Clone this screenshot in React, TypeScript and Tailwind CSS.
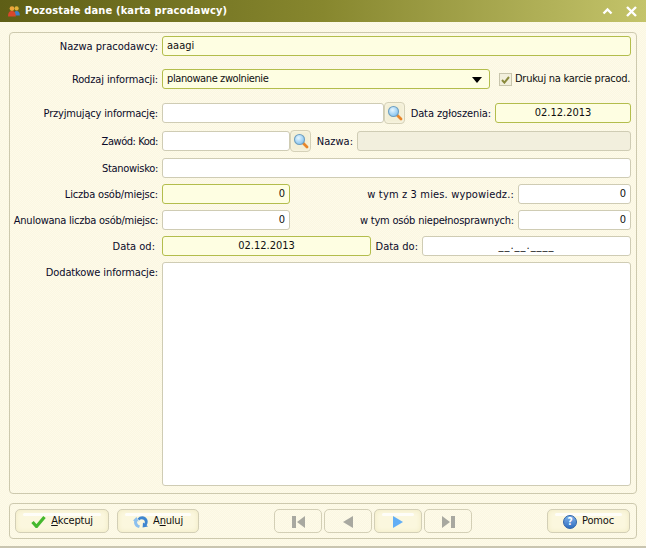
import React from "react";

const font = "font-['DejaVu_Sans',sans-serif] [font-stretch:condensed]";

function Label({ w, children }: { w: string; children: React.ReactNode }) {
  return <div className={`${w} h-[20px] shrink-0 whitespace-nowrap pt-px text-right text-[11px] leading-[19px] text-[#0a0a28]`}>{children}</div>;
}

function Field({ className, req, gray, right, center, children }: { className: string; req?: boolean; gray?: boolean; right?: boolean; center?: boolean; children?: React.ReactNode }) {
  const tone = req ? "border-[#b3bd4c] bg-[#fefee2]" : gray ? "border-[#cfccb4] bg-[#f2efdd]" : "border-[#cfccb4] bg-white";
  const align = right ? "justify-end" : center ? "justify-center" : "justify-start";
  return <div className={`${className} ${tone} ${align} flex h-[20px] items-center rounded-[3px] border px-[4px] pt-px text-[11px] text-[#101010] shrink-0`}>{children}</div>;
}

function Magnifier({ id }: { id: string }) {
  return (
    <div className="-my-px flex h-[22px] w-[21px] shrink-0 items-center justify-center rounded-[4px] border border-[#d5d1b8] bg-[#f3efd6] shadow-[inset_0_0_3px_#fbf9ec]">
      <svg width="16" height="16" viewBox="0 0 16 16">
        <defs>
          <radialGradient id={id} cx="40%" cy="35%" r="70%">
            <stop offset="0%" stopColor="#e6f6ff" />
            <stop offset="100%" stopColor="#7fc0ee" />
          </radialGradient>
        </defs>
        <path d="M9.5 9.5 14 14" stroke="#e8862a" strokeWidth="2.8" strokeLinecap="round" />
        <circle cx="6.5" cy="6.5" r="5" fill={`url(#${id})`} stroke="#6f9fc0" strokeWidth="1.1" />
      </svg>
    </div>
  );
}

function Btn({ className, children, hi }: { className: string; children: React.ReactNode; hi?: boolean }) {
  return (
    <div className={`${className} relative flex h-[24px] shrink-0 items-center justify-center rounded-[5px] border border-[#d3cfb6] text-[11px] tracking-[-0.2px] text-[#101010] ${hi ? "bg-[#fbf7de] shadow-[inset_0_0_5px_#efe9c0]" : ""}`}>
      {hi && <div className="absolute left-[7px] right-[7px] top-[3px] h-[3px] rounded-full bg-white/80" />}
      <div className="relative flex items-center gap-[5px] pt-px">{children}</div>
    </div>
  );
}

export default function App() {
  return (
    <div className={`${font} flex h-[548px] w-[646px] flex-col overflow-hidden bg-[repeating-conic-gradient(#fbf7e1_0_25%,#fdfaea_0_50%)] bg-[length:2px_2px]`}>
      <div className="flex h-[22px] shrink-0 items-center bg-gradient-to-r from-[#5e5e16] via-[#87872e] to-[#c4c46a] pl-[8px] pr-[9px]">
        <svg width="12" height="12" viewBox="0 0 12 12" className="shrink-0">
          <circle cx="8.6" cy="3.4" r="2.1" fill="#e2b23a" />
          <path d="M5.5 10.5c0-3 1.2-4.6 3.2-4.6s3.1 1.6 3.1 4.6z" fill="#3d7fc9" />
          <circle cx="4" cy="3.6" r="2.4" fill="#eda53c" />
          <path d="M0 11.5c0-3.6 1.4-5.4 3.9-5.4s3.9 1.8 3.9 5.4z" fill="#d8472c" />
        </svg>
        <div className="ml-[5px] text-[11px] font-bold tracking-[0.15px] text-white">Pozostałe dane (karta pracodawcy)</div>
        <div className="ml-auto flex items-center gap-[13px]">
          <svg width="11" height="8" viewBox="0 0 11 8"><path d="M1.5 6.5 5.5 2.5l4 4" stroke="#fff" strokeWidth="2.4" fill="none" /></svg>
          <svg width="11" height="11" viewBox="0 0 11 11"><path d="M1 1l9 9M10 1l-9 9" stroke="#fff" strokeWidth="2.4" fill="none" /></svg>
        </div>
      </div>

      <div className="mx-[9px] mt-[10px] flex h-[462px] shrink-0 flex-col rounded-[4px] border border-[#cdc9ae] pr-[5px] pt-[3px]">
        <div className="flex gap-[4px]">
          <Label w="w-[148px]">Nazwa pracodawcy:</Label>
          <Field className="w-[469px]" req>aaagi</Field>
        </div>

        <div className="mt-[13px] flex items-center gap-[4px]">
          <Label w="w-[148px] tracking-[-0.12px]">Rodzaj informacji:</Label>
          <Field className="w-[328px] !justify-between" req>
            <span className="tracking-[-0.4px]">planowane zwolnienie</span>
            <svg width="10" height="6" viewBox="0 0 10 6" className="mr-[3px]"><path d="M0 0h10L5 6z" fill="#000" /></svg>
          </Field>
          <div className="ml-[5px] flex items-center gap-[3px] whitespace-nowrap pt-px text-[11px] tracking-[-0.25px] text-[#101010]">
            <div className="flex h-[13px] w-[13px] items-center justify-center border border-[#c8c5ac] bg-[#f2efdc]">
              <svg width="9" height="8" viewBox="0 0 9 8"><path d="M1 4l2.4 2.6L8 1" stroke="#8a8a3c" strokeWidth="2" fill="none" /></svg>
            </div>
            Drukuj na karcie pracod.
          </div>
        </div>

        <div className="mt-[14px] flex items-center">
          <Label w="w-[148px] tracking-[-0.18px]">Przyjmujący informację:</Label>
          <Field className="ml-[4px] w-[222px]" />
          <Magnifier id="m1" />
          <Label w="w-[86px] tracking-[-0.1px]">Data zgłoszenia:</Label>
          <Field className="ml-[4px] w-[136px]" req center>02.12.2013</Field>
        </div>

        <div className="mt-[8px] flex items-center">
          <Label w="w-[148px] tracking-[-0.45px]">Zawód: Kod:</Label>
          <Field className="ml-[4px] w-[128px]" />
          <Magnifier id="m2" />
          <Label w="w-[42px]">Nazwa:</Label>
          <Field className="ml-[4px] w-[274px]" gray />
        </div>

        <div className="mt-[7px] flex items-center gap-[4px]">
          <Label w="w-[148px] tracking-[-0.3px]">Stanowisko:</Label>
          <Field className="w-[469px]" />
        </div>

        <div className="mt-[6px] flex items-center">
          <Label w="w-[148px] tracking-[-0.17px]">Liczba osób/miejsc:</Label>
          <Field className="ml-[4px] w-[128px]" req right>0</Field>
          <Label w="w-[224px] tracking-[0.15px]">w tym z 3 mies. wypowiedz.:</Label>
          <Field className="ml-[4px] w-[113px]" right>0</Field>
        </div>

        <div className="mt-[6px] flex items-center">
          <Label w="w-[148px] tracking-[-0.25px]">Anulowana liczba osób/miejsc:</Label>
          <Field className="ml-[4px] w-[128px]" right>0</Field>
          <Label w="w-[224px] tracking-[-0.2px]">w tym osób niepełnosprawnych:</Label>
          <Field className="ml-[4px] w-[113px]" right>0</Field>
        </div>

        <div className="mt-[6px] flex items-center">
          <Label w="w-[145px]">Data od:</Label>
          <Field className="ml-[7px] w-[209px]" req center>02.12.2013</Field>
          <Label w="w-[47px]">Data do:</Label>
          <Field className="ml-[4px] w-[209px]" center><span className="tracking-[1px]">__.__.____</span></Field>
        </div>

        <div className="mt-[6px] flex gap-[4px]">
          <Label w="w-[148px] tracking-[-0.1px]">Dodatkowe informacje:</Label>
          <Field className="!h-[224px] w-[469px]" />
        </div>
      </div>

      <div className="mx-[9px] mt-[9px] flex h-[36px] shrink-0 items-center rounded-[4px] border border-[#cdc9ae] pl-[5px] pr-[6px]">
        <Btn className="w-[94px]" hi>
          <svg width="15" height="13" viewBox="0 0 15 13"><path d="M1.5 7l4 4.5L13.5 2" stroke="#45b82e" strokeWidth="3.2" fill="none" /></svg>
          <span><u>A</u>kceptuj</span>
        </Btn>
        <Btn className="ml-[8px] w-[82px]" hi>
          <svg width="15" height="14" viewBox="0 0 15 14">
            <path d="M6 13C2 12 .6 9 1.2 6L0 5.5 3.5 2l2.2 4.6-1.6-.4C3.8 8.4 5 10 7 10.6z" fill="#8cc0ee" />
            <path d="M4.6 3.6C6.4 1 10 .4 12.4 2.2c2.6 2 3 5.6 1.2 8L15 11.4 9.6 12.6l.4-5.2 1.4 1.2c.8-1.4.4-3-.8-3.8C9.2 3.8 7.4 4 6.2 5.4z" fill="#3f86d0" />
          </svg>
          <span>A<u>n</u>uluj</span>
        </Btn>
        <Btn className="ml-[75px] w-[48px]">
          <svg width="13" height="12" viewBox="0 0 13 12"><path d="M0 0h4v12H0zM13 0v12L5 6z" fill="#a8a8a0" /></svg>
        </Btn>
        <Btn className="ml-[2px] w-[48px]">
          <svg width="10" height="12" viewBox="0 0 10 12"><path d="M10 0v12L0 6z" fill="#a8a8a0" /></svg>
        </Btn>
        <Btn className="ml-[2px] w-[48px]" hi>
          <svg width="10" height="12" viewBox="0 0 10 12"><path d="M0 0v12l10-6z" fill="#62aef5" /></svg>
        </Btn>
        <Btn className="ml-[2px] w-[48px]">
          <svg width="13" height="12" viewBox="0 0 13 12"><path d="M13 0H9v12h4zM0 0v12l8-6z" fill="#a8a8a0" /></svg>
        </Btn>
        <Btn className="ml-auto w-[83px]" hi>
          <div className="flex h-[14px] w-[14px] items-center justify-center rounded-full border border-[#2c62a8] bg-gradient-to-b from-[#7fb2ea] to-[#2f6fc0] text-[10px] font-bold leading-none text-white">?</div>
          <span>Pomoc</span>
        </Btn>
      </div>

      <div className="mt-auto h-[2px] shrink-0 bg-[#c9c5b0]" />
    </div>
  );
}
